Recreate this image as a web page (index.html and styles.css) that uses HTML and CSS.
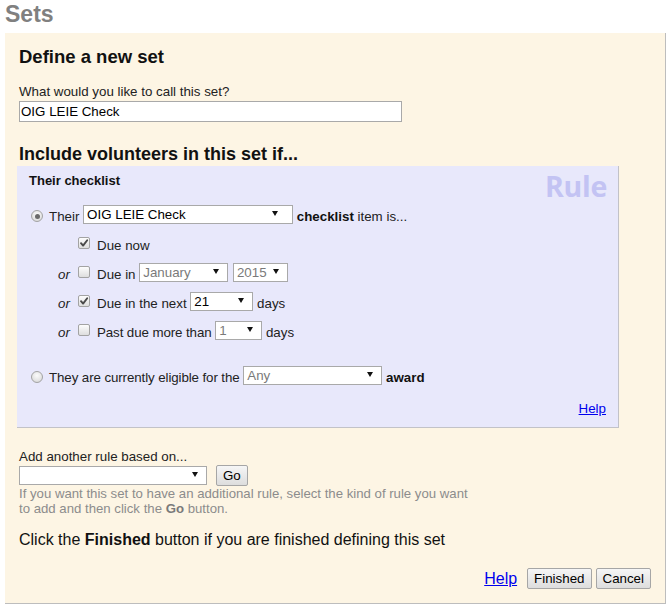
FILE: index.html
```html
<!DOCTYPE html>
<html>
<head>
<meta charset="utf-8">
<title>Sets</title>
<link rel="stylesheet" href="styles.css">
</head>
<body>
<h1 class="page-title">Sets</h1>
<div class="panel">
  <h2 class="section-title">Define a new set</h2>
  <div class="field-label">What would you like to call this set?</div>
  <input class="text-input" type="text" value="OIG LEIE Check">
  <h2 class="section-title include-title">Include volunteers in this set if...</h2>

  <div class="rule-box">
    <div class="rule-mark">Rule</div>
    <div class="rule-heading">Their checklist</div>

    <div class="rule-rows">
      <div class="row radio-line"><span class="radio checked"></span>Their <span class="select sel-checklist">OIG LEIE Check</span> <b>checklist</b> item is...</div>
      <div class="row check-line"><span class="or"></span><span class="checkbox checked"><svg viewBox="0 0 12 12" width="12" height="12"><path d="M3 6.2 L5.1 8.6 L9.2 3.2" fill="none" stroke="#4a4a4a" stroke-width="1.9" stroke-linecap="round" stroke-linejoin="round"/></svg></span>Due now</div>
      <div class="row check-line"><span class="or">or</span><span class="checkbox"></span>Due in <span class="select disabled sel-month">January</span> <span class="select disabled sel-year">2015</span></div>
      <div class="row check-line"><span class="or">or</span><span class="checkbox checked"><svg viewBox="0 0 12 12" width="12" height="12"><path d="M3 6.2 L5.1 8.6 L9.2 3.2" fill="none" stroke="#4a4a4a" stroke-width="1.9" stroke-linecap="round" stroke-linejoin="round"/></svg></span>Due in the next <span class="select sel-days">21</span> days</div>
      <div class="row check-line"><span class="or">or</span><span class="checkbox"></span><span class="tight">Past due more than</span> <span class="select disabled sel-past">1</span> days</div>
    </div>

    <div class="row radio-line award-line"><span class="radio"></span><span class="tight">They are currently eligible for the</span> <span class="select disabled sel-award">Any</span> <b>award</b></div>

    <div class="rule-help"><a href="#">Help</a></div>
  </div>

  <div class="field-label add-label">Add another rule based on...</div>
  <div class="add-row">
    <span class="select sel-add"></span>
    <button class="btn" type="button">Go</button>
  </div>
  <div class="hint">If you want this set to have an additional rule, select the kind of rule you want<br>to add and then click the <b>Go</b> button.</div>
  <div class="finish-text">Click the <b>Finished</b> button if you are finished defining this set</div>
  <div class="actions">
    <a href="#" class="help-big">Help</a>
    <button class="btn" type="button">Finished</button>
    <button class="btn" type="button">Cancel</button>
  </div>
</div>
</body>
</html>
```

FILE: styles.css
```css
* { box-sizing: border-box; }

body {
  margin: 0;
  background: #ffffff;
  font-family: "Liberation Sans", Arial, sans-serif;
  font-size: 13.33px;
  color: #222222;
}

.page-title {
  margin: 0;
  height: 33px;
  padding-left: 5px;
  font-size: 23px;
  line-height: 29px;
  font-weight: bold;
  color: #808080;
}

.panel {
  margin-left: 5px;
  width: 661px;
  padding: 13px 14px 14px 14px;
  background: #fdf5e4;
  border-right: 1px solid #bdbdbd;
  border-bottom: 1px solid #bdbdbd;
}

.section-title {
  margin: 0;
  font-size: 18.5px;
  line-height: 22px;
  font-weight: bold;
  color: #111111;
}

.include-title {
  margin-top: 21px;
  font-size: 18px;
}

.field-label {
  margin-top: 16px;
  line-height: 16px;
}

.text-input {
  display: block;
  margin: 1px 0 0 0;
  width: 383px;
  height: 21px;
  padding: 0 0 0 1px;
  border: 1px solid #a9a9a9;
  background: #ffffff;
  font-family: "Liberation Sans", Arial, sans-serif;
  font-size: 13.33px;
  color: #000000;
  outline: none;
}

/* Rule box */
.rule-box {
  position: relative;
  margin-top: 1px;
  margin-left: -2px;
  width: 602px;
  padding: 7px 12px 10px 12px;
  background: #e8e8fb;
  border-right: 1px solid #c2c2c8;
  border-bottom: 1px solid #c2c2c8;
}

.rule-mark {
  position: absolute;
  top: 6px;
  right: 11px;
  font-family: "Open Sans", "Liberation Sans", sans-serif;
  font-weight: 700;
  font-size: 28.5px;
  line-height: 29px;
  color: #c3c3f3;
  letter-spacing: -0.3px;
}

.rule-heading {
  font-weight: bold;
  font-size: 13px;
  line-height: 16px;
  color: #111111;
}

.rule-rows {
  margin-top: 16px;
  display: flex;
  flex-direction: column;
  gap: 5px;
}

.row {
  height: 24px;
  line-height: 24px;
  white-space: nowrap;
}

.row b { color: #111111; }

.tight { letter-spacing: -0.1px; }

.award-line { margin-top: 21px; }

.check-line { padding-left: 29px; }

.or {
  display: inline-block;
  width: 20px;
  font-style: italic;
}

.radio {
  display: inline-block;
  position: relative;
  width: 12px;
  height: 12px;
  margin: 0 6px 0 2px;
  vertical-align: -1px;
  border: 1px solid #a3a3a3;
  border-radius: 50%;
  background: radial-gradient(circle at 50% 35%, #fbfbfb 0%, #e4e4e4 60%, #d2d2d2 100%);
}

.radio.checked::after {
  content: "";
  position: absolute;
  left: 2.5px;
  top: 2.5px;
  width: 5px;
  height: 5px;
  border-radius: 50%;
  background: #6a6a6a;
}

.checkbox {
  display: inline-block;
  width: 12px;
  height: 12px;
  margin-right: 7px;
  vertical-align: 1px;
  border: 1px solid #a3a3a3;
  border-radius: 2px;
  background: linear-gradient(#fdfdfd, #dedede);
  position: relative;
}

.checkbox svg {
  position: absolute;
  left: -1px;
  top: -1px;
}

.select {
  display: inline-block;
  position: relative;
  height: 19px;
  line-height: 17px;
  padding-left: 3px;
  vertical-align: 2px;
  border: 1px solid #a9a9a9;
  background: #ffffff;
  color: #000000;
  font-size: 13.33px;
  overflow: visible;
}

.select::after {
  content: "";
  position: absolute;
  right: 8px;
  top: 5px;
  border-left: 3px solid transparent;
  border-right: 3px solid transparent;
  border-top: 5px solid #111111;
}

.select.disabled { color: #7a7a7a; }

.sel-checklist { width: 210px; }
.sel-checklist::after { right: 14px; }
.sel-month { width: 89px; }
.sel-year { width: 55px; margin-left: 1px; }
.sel-days { width: 63px; }
.sel-past { width: 47px; }
.sel-award { width: 139px; }
.sel-add { width: 188px; vertical-align: middle; }

.rule-help {
  margin-top: 11px;
  line-height: 16px;
  text-align: right;
}

.rule-help a { color: #0000ee; }

/* bottom section */
.add-label { margin-top: 21px; }

.add-row {
  display: flex;
  align-items: center;
  gap: 9px;
  height: 21px;
}

.btn {
  height: 21px;
  padding: 0 6px;
  border: 1px solid #a6a6a6;
  border-radius: 2px;
  background: linear-gradient(#f6f6f6, #dddddd);
  font-family: "Liberation Sans", Arial, sans-serif;
  font-size: 13.33px;
  color: #000000;
  line-height: 19px;
}

.hint {
  font-size: 13.2px;
  line-height: 15px;
  color: #8c8c8c;
}

.hint b { color: #7a7a7a; }

.finish-text {
  margin-top: 14px;
  font-size: 16px;
  line-height: 20px;
  color: #111111;
}

.actions {
  margin-top: 18px;
  display: flex;
  justify-content: flex-end;
  align-items: center;
  gap: 4px;
  height: 21px;
}

.help-big {
  margin-right: 6px;
  font-size: 16px;
  line-height: 20px;
  color: #0000ee;
}
```
